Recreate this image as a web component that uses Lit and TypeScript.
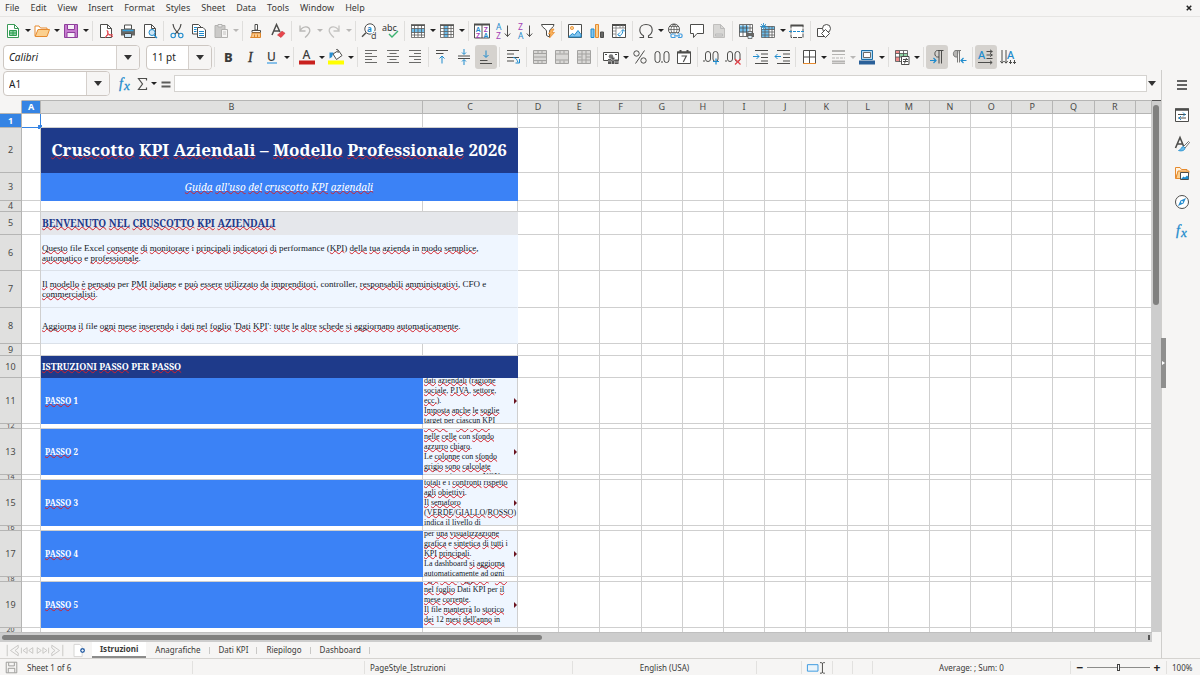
import { LitElement, html, css, svg, nothing, type TemplateResult } from "lit";
import { customElement } from "lit/decorators.js";
import { classMap } from "lit/directives/class-map.js";

const INK = "#4d4d4b";
const BLUE = "#1e8bcd";

/* Toolbar glyphs, all drawn on a 16 by 16 grid. */
const icons: Record<string, TemplateResult> = {
  new: svg`<path d="M2.500 1.500h7l4 4v9h-11z" fill="#fff" stroke="#3a9a57"/><path d="M9.500 1.500v4h4" fill="none" stroke="#3a9a57"/><path d="M4.500 7.500h7v5h-7zM4.500 10h7M8 7.500v5" fill="#8fd3a4" stroke="#2f9e52"/>`,
  open: svg`<path d="M1 13V3h4l1.500 2H13v2" fill="#fff" stroke="#e68a2e"/><path d="M1.200 13.500 4 6.500h11.500l-2.500 7z" fill="#fbd08f" stroke="#e68a2e"/>`,
  save: svg`<path d="M1.500 1.500h13v13h-13z" fill="#c77bd0" stroke="#8e3f9b"/><path d="M4.500 1.500h7v5h-7zM4 9.500h8v5H4z" fill="#f6f0f8" stroke="#8e3f9b"/>`,
  pdf: svg`<path d="M2.500 1.500h7l4 4v9h-11z" fill="#fff" stroke="${INK}"/><path d="M9.500 1.500v4h4" fill="none" stroke="${INK}"/><path d="M9 7c.5 4 2.500 6 6 6.500M10 8c0 3-1 5.500-3 6.800M7.500 13.500c2-2 4-2.500 7.500-1.500" fill="none" stroke="#e2434b"/>`,
  print: svg`<path d="M4.500 2h7v4h-7z" fill="#fff" stroke="${INK}"/><path d="M1 6h14v6.500H1z" fill="#686866"/><path d="M2.500 7.500h11" stroke="#35a1dd" stroke-width="1.500"/><path d="M4.500 10.500h7v4h-7z" fill="#cfe6f5" stroke="${INK}"/>`,
  preview: svg`<path d="M2.500 1.500h7l4 4v9h-11z" fill="#fff" stroke="${INK}"/><path d="M9.500 1.500v4h4" fill="none" stroke="${INK}"/><circle cx="10" cy="9.500" r="3" fill="#cfe6f5" stroke="${BLUE}"/><path d="m12 12 3 3" stroke="${BLUE}" stroke-width="1.300"/>`,
  cut: svg`<path d="M4 1c.5 4 2.500 7 6 10M12 1c-.5 4-2.500 7-6 10" fill="none" stroke="${INK}" stroke-width="1.200"/><circle cx="4.200" cy="12.500" r="2.200" fill="none" stroke="${BLUE}" stroke-width="1.100"/><circle cx="11.800" cy="12.500" r="2.200" fill="none" stroke="${BLUE}" stroke-width="1.100"/>`,
  copy: svg`<path d="M1.500 1.500h6l2.500 2.500v7H1.500z" fill="#fff" stroke="${INK}"/><path d="M6.500 4.500h5.500l2.500 2.500v7.500h-8z" fill="#fff" stroke="${INK}"/><path d="M3 4.500h3M3 6.500h2.500M3 8.500h2.500M8 8.500h5M8 10.500h5M8 12.500h5" stroke="${BLUE}"/>`,
  paste: svg`<path d="M2 2.500h10v12H2z" fill="#cbcac8" stroke="#b3b2b0"/><path d="M5 1.500h4v2.500H5z" fill="#eee" stroke="#b3b2b0"/><path d="M8.500 6.500h6v8h-6z" fill="#f6f5f4" stroke="#b3b2b0"/><path d="M10 9h3M10 11h3" stroke="#c3c2c0"/>`,
  clone: svg`<path d="M7 1.500h2.500V7H7z" fill="#fff" stroke="${INK}"/><path d="M4 7.500h8.500v2H4z" fill="#fff" stroke="${INK}"/><path d="M4 10h8.500v4.500h-10c1-1 1.500-2.500 1.500-4.500z" fill="#fbc98a" stroke="#dd852b"/><path d="M6.500 11.500v3M9.500 11.500v3" stroke="#dd852b"/>`,
  clear: svg`<path d="m2 12 4.500-10.500L10 9M3.800 8H10" fill="none" stroke="${INK}" stroke-width="1.500"/><path d="m7.500 12 4.500-3.800 3 2-4 4.300z" fill="#e8464c" stroke="#c53239" stroke-width=".6"/>`,
  undo: svg`<path d="M3 2.500V8h5.500M3.200 7.800C5.500 3 12 2.500 12.800 7c.4 3-2 5-4.800 7.500" fill="none" stroke="#b9b8b6" stroke-width="1.300"/>`,
  redo: svg`<path d="M13 2.500V8H7.500M12.800 7.800C10.500 3 4 2.500 3.200 7c-.4 3 2 5 4.800 7.500" fill="none" stroke="#c4c3c1" stroke-width="1.300"/>`,
  find: svg`<circle cx="9" cy="6" r="5.200" fill="#fff" stroke="${INK}"/><path d="m5 9.800-4 4" stroke="${INK}" stroke-width="1.500"/><text x="6" y="8.500" font-size="8" font-weight="700" fill="${BLUE}">a</text><text x="10" y="15.500" font-size="9" fill="${INK}" stroke="#f6f5f4" stroke-width="2" paint-order="stroke">d</text>`,
  spell: svg`<text x="-1" y="8" font-size="9" fill="#333">abc</text><path d="m6 11 3 3 6-6" fill="none" stroke="#3cb371" stroke-width="1.400"/>`,
  row: svg`<path d="M1.500 2.500h13v12h-13z" fill="#fff"/><path d="M1.500 5.500h13v4h-13z" fill="#6cbcea"/><path d="M1.500 2.500h13v12h-13zM1.500 5.500h13M1.500 9.500h13M1.500 12h13M4.500 2v12M8 2v12M11.500 2v12" fill="none" stroke="#5c5c5a" stroke-width=".8"/><path d="M1 2h14" stroke="${INK}" stroke-width="1.500"/>`,
  col: svg`<path d="M1.500 2.500h13v12h-13z" fill="#fff"/><path d="M5 2.500h4v12H5z" fill="#6cbcea"/><path d="M1.500 2.500h13v12h-13zM1.500 5.500h13M1.500 8.500h13M1.500 11.500h13M5 2v12M9 2v12M12 2v12" fill="none" stroke="#5c5c5a" stroke-width=".8"/><path d="M1 2h14" stroke="${INK}" stroke-width="1.500"/>`,
  sort: svg`<path d="M.5 1.500h15v13.500H.5zM8 2v13" fill="#fff" stroke="${INK}"/><path d="M0 1.500h16" stroke="${INK}" stroke-width="2"/><g font-size="7" font-weight="600"><text x="1.800" y="8.800" fill="${BLUE}">A</text><text x="9.800" y="8.800" fill="#a33fb5">Z</text><text x="2" y="14.600" fill="#a33fb5">Z</text><text x="9.500" y="14.600" fill="${BLUE}">A</text></g>`,
  asc: svg`<g font-size="8.500"><text x="0" y="7" fill="${BLUE}">A</text><text x="0" y="15.500" fill="#a33fb5">Z</text></g><path d="M11.500 2.500v11M8.800 10.500l2.700 3 2.700-3" fill="none" stroke="${INK}"/>`,
  desc: svg`<g font-size="8.500"><text x="0" y="7" fill="#a33fb5">Z</text><text x="0" y="15.500" fill="${BLUE}">A</text></g><path d="M11.500 2.500v11M8.800 10.500l2.700 3 2.700-3" fill="none" stroke="${INK}"/>`,
  filter: svg`<path d="M1.500 1.500h12.500c0 3-4.500 4.500-4.500 6.500v6l-3-1.500V8C6.500 6 1.500 4.500 1.500 1.500z" fill="#fff" stroke="${INK}"/><path d="m11.500 6-3 5h2.200L9.500 15l5-5.500H12L14 6z" fill="#f9b25c" stroke="#e68a2e" stroke-width=".7"/>`,
  image: svg`<path d="M1.500 1.500h13v13h-13z" fill="#fff" stroke="${INK}"/><circle cx="5" cy="5" r="1.600" fill="#fbd08f" stroke="#e68a2e" stroke-width=".8"/><path d="m2 13.500 3.500-3 2 1.500 3.500-4.500 3 4v2.500H2z" fill="#83c5ee" stroke="${BLUE}"/>`,
  chart: svg`<path d="M2 6h3v8.500H2z" fill="#83c5ee" stroke="${BLUE}"/><path d="M6.500 1.500h3v13h-3z" fill="#fbd08f" stroke="#e68a2e"/><path d="M11.500 9h3v5.500h-3z" fill="#686866" stroke="${INK}"/>`,
  pivot: svg`<path d="M1.500 1.500h13v13h-13z" fill="#fff" stroke="${INK}"/><path d="M1 2h14" stroke="${INK}" stroke-width="2"/><path d="M2 5h12M5 3v11M2 8h3M2 11h3M9 2v3M12 2v3" stroke="#777" stroke-width=".8"/><path d="M7 11.500c0 2 4.500 2 5-4.500M10 8.500 12 6.500l2 2M9 9.500l-2 2 2 2" fill="none" stroke="${BLUE}"/>`,
  omega: svg`<path d="M1.500 14.500h4v-1.800C2.500 11 1.800 9 1.800 7c0-3.500 2.700-5.500 6.200-5.500s6.200 2 6.200 5.500c0 2-.7 4-3.700 5.700v1.800h4" fill="none" stroke="${INK}" stroke-width="1.100"/>`,
  link: svg`<circle cx="7" cy="6.500" r="5.500" fill="#fff" stroke="${INK}"/><path d="M1.500 6.500h11M7 1v10M2.500 3.500h9M2.500 9.500h9M7 1c-4 3.500-4 7.500 0 11M7 1c4 3.500 4 7.500 0 11" fill="none" stroke="${INK}" stroke-width=".7"/><path d="M3.500 10.500h12v4h-12z" fill="#f6f5f4"/><path d="M8.500 11H5c-1.500 0-1.500 3.500 0 3.500h3.500M11 11h3c1.500 0 1.500 3.500 0 3.500h-3M7 12.800h6" fill="none" stroke="#3d9ae0" stroke-width="1.200"/>`,
  comment: svg`<path d="M1.500 1.500h13v9H8l-3.500 4v-4h-3z" fill="#fff" stroke="${INK}"/>`,
  header: svg`<path d="M2.500 1.500h7l4 4v9h-11z" fill="#d8d7d5" stroke="#c0bfbd"/><path d="M9.500 1.500v4h4M4.500 11h7v2h-7z" fill="none" stroke="#bbb"/>`,
  area: svg`<path d="M1.500 1.500h13v12h-13z" fill="#fff"/><path d="M1.500 2.500h9v7h-9z" fill="#6cbcea"/><path d="M1.500 1.500h13v12h-13zM1.500 5h13M1.500 9h13M5 2v11M8.500 2v11M12 2v11" fill="none" stroke="${INK}" stroke-width=".8"/><path d="M8 10h8v4H8z" fill="#686866"/><path d="M10 8.500h4v2h-4zM10 12.500h4v3h-4z" fill="#d9ecf8" stroke="${INK}" stroke-width=".7"/>`,
  freeze: svg`<path d="M1.500 3.500h13v11h-13z" fill="#fff"/><path d="M5 3.500h10v3H5zM1.500 6.500H5v8H1.500z" fill="#6cbcea"/><path d="M5 3.500h4v11H5z" fill="#6cbcea"/><path d="M1.500 3.500h13v11h-13zM1.500 6.500h13M1.500 9h13M1.500 12h13M5 2v13M9 3v12M12 3v12" fill="none" stroke="#5c5c5a" stroke-width=".8"/><path d="M3.500 0v7M0 3.500h7M1 1l5 5M6 1 1 6" stroke="${BLUE}" stroke-width=".8"/>`,
  split: svg`<path d="M2 2.500h12v12H2z" fill="#fff" stroke="${INK}" stroke-dasharray="4 1"/><path d="M1.500 2.500h13" stroke="${INK}" stroke-width="2"/><path d="M0 8.500h16" stroke="${BLUE}" stroke-dasharray="3 1"/>`,
  shapes: svg`<path d="M1.500 5.500h7v8h-7z" fill="#fff" stroke="${INK}"/><circle cx="10.500" cy="5.500" r="4" fill="#fff" stroke="${INK}"/><path d="m9.500 6.500 4 4-4 4-4-4z" fill="#fff" stroke="${INK}"/>`,
  bold: svg`<text x="4" y="12.500" font-size="13" font-weight="800" fill="#3c3c3a">B</text>`,
  italic: svg`<text x="6" y="12.500" font-size="14" font-style="italic" font-family="Liberation Serif" fill="#333" stroke="#333" stroke-width=".3">I</text>`,
  underline: svg`<text x="3" y="11.500" font-size="12" font-weight="500" fill="#3c3c3a">U</text><path d="M3 14h10" stroke="#62aee6" stroke-width="1.500"/>`,
  color: svg`<text x="3.500" y="10" font-size="12" font-weight="500" fill="#3c3c3a">A</text><path d="M0 11.500h16v4H0z" fill="#c9211e"/>`,
  fill: svg`<path d="M0 11.500h16v4H0z" fill="#ff0"/><path d="m5 5 5.500-3.500 3.500 5-5.500 4z" fill="#fff" stroke="${INK}"/><path d="M8 1c1-1.500 3-.5 2 3" fill="none" stroke="${INK}"/><path d="M1.500 9.500V3.500h4L4 8z" fill="#2a8fd0"/>`,
  left: svg`<path d="M2 1.500h12M2 4.500h7M2 7.500h12M2 10.500h7M2 13.500h12" stroke="#6b6b69"/>`,
  center: svg`<path d="M2 1.500h12M4.500 4.500h7M2 7.500h12M4.500 10.500h7M2 13.500h12" stroke="#6b6b69"/>`,
  right: svg`<path d="M2 1.500h12M7 4.500h7M2 7.500h12M7 10.500h7M2 13.500h12" stroke="#6b6b69"/>`,
  top: svg`<path d="M2 1.500h12M2 4.500h7.500" stroke="${INK}"/><path d="M8 14.500V7M5.500 9.500 8 7l2.500 2.500" fill="none" stroke="${BLUE}"/>`,
  middle: svg`<path d="M2 7h12M2 9.500h12" stroke="${INK}"/><path d="M8 0v5M6 3.500l2 2 2-2M8 16v-5M6 12.500l2-2 2 2" fill="none" stroke="${BLUE}"/>`,
  bottom: svg`<path d="M2 14.500h12M2 11.500h7.500" stroke="${INK}"/><path d="M8 1.500V8M5.500 6 8 8.500 10.500 6" fill="none" stroke="${BLUE}"/>`,
  wrap: svg`<path d="M2 1.500h12M2 5h7M2 8.500h12M2 12h7" stroke="${INK}"/><path d="M8 8.500c3 0 4 2 5 5M14.500 10v4h-4" fill="none" stroke="${BLUE}"/>`,
  merge: svg`<path d="M1.500 1.500h13v13h-13zM1.500 4.500h13M1.500 8h13M1.500 11.500h13M6 1.500v3M10 1.500v3M6 11.500v3M10 11.500v3" fill="#d9d8d6" stroke="#a3a2a0"/>`,
  merge2: svg`<path d="M1.500 1.500h13v13h-13zM1.500 5h13M1.500 11h13M6 1.500v3M10 1.500v3M6 11.500v3M10 11.500v3" fill="#d9d8d6" stroke="#a3a2a0"/>`,
  merge3: svg`<path d="M1.500 1.500h13v13h-13zM1.500 5h13M1.500 8h4M10 8h4M1.500 11h13M6 1.500v13M10 1.500v13" fill="#d9d8d6" stroke="#a3a2a0"/>`,
  currency: svg`<path d="M.5 3.500h15v8H.5z" fill="#fff" stroke="${INK}"/><circle cx="8" cy="7.500" r="2.300" fill="#777"/><path d="M2 5.500h2M12 5.500h2" stroke="${INK}"/><path d="M5 10h3v5H5zM8.500 8.500h3V15h-3zM12 10.500h3.500V15H12z" fill="#555"/><path d="M5 12h3M8.500 11h3M12 13h3" stroke="#ddd" stroke-width=".7"/>`,
  percent: svg`<circle cx="4.500" cy="4.500" r="2.700" fill="none" stroke="${INK}"/><circle cx="11.500" cy="11.500" r="2.700" fill="none" stroke="${INK}"/><path d="M12.500 1.500 3.500 14.500" stroke="${INK}"/>`,
  number: svg`<rect x="1" y="2.500" width="5" height="11" rx="2.500" fill="none" stroke="${INK}"/><rect x="10" y="2.500" width="5" height="11" rx="2.500" fill="none" stroke="${INK}"/><path d="M8 12v2" stroke="${INK}"/>`,
  date: svg`<path d="M1.500 3h13v11.500h-13z" fill="#fff" stroke="${INK}"/><path d="M1 3.500h14M4.500 1v3M11.500 1v3" stroke="${INK}" stroke-width="2"/><path d="M5.500 7h4.800L7.300 13" fill="none" stroke="${INK}" stroke-width="1.200"/>`,
  adddec: svg`<path d="M1 11v2" stroke="${INK}"/><rect x="2.500" y="2.500" width="5" height="10" rx="2.500" fill="none" stroke="${INK}"/><rect x="10" y="2.500" width="5" height="10" rx="2.500" fill="none" stroke="${INK}"/><path d="M13 9.500v6M10 12.500h6" stroke="${BLUE}" stroke-width="1.200"/>`,
  deldec: svg`<path d="M1 11v2" stroke="${INK}"/><rect x="2.500" y="2.500" width="5" height="10" rx="2.500" fill="none" stroke="${INK}"/><rect x="10" y="2.500" width="5" height="10" rx="2.500" fill="none" stroke="${INK}"/><path d="m10 10 5.500 5.500M15.500 10 10 15.500" stroke="#e2434b" stroke-width="1.200"/>`,
  indent: svg`<path d="M3 1.500h13M9 5h7M9 8.500h7M9 12h7M3 14.500h13" stroke="${INK}"/><path d="M1 7.500h6M4.500 5 7 7.500 4.500 10" fill="none" stroke="${BLUE}"/>`,
  outdent: svg`<path d="M3 1.500h13M9 5h7M9 8.500h7M9 12h7M3 14.500h13" stroke="${INK}"/><path d="M1 7.500h6M3.500 5 1 7.500 3.500 10" fill="none" stroke="${BLUE}"/>`,
  borders: svg`<path d="M2.500 14.500v-13h12v13M8.500 2v12M2.500 8h12" fill="#fff" stroke="${INK}"/><path d="M2 14.500h13" stroke="#e68a2e"/>`,
  bstyle: svg`<path d="M2 2h13M2 12.500h13" stroke="#b5b4b2" stroke-width="2"/><path d="M2 5.500h13M2 14.500h13" stroke="#b5b4b2"/><path d="M2 9h13" stroke="#b5b4b2" stroke-dasharray="3 1"/>`,
  bcolor: svg`<path d="M2.500 1.500h11v9h-11z" fill="#b5dbf4" stroke="#1c6fa8"/><path d="M4.500 3.500h7v5h-7z" fill="#fff" stroke="#6a6a68"/><path d="M0 11.500h16v4H0z" fill="#2a6099"/>`,
  cond: svg`<path d="M1.500 1.500h12v11h-12z" fill="#fff"/><path d="M1.500 1.500h4v3h-4zM1.500 8h4v4h-4z" fill="#f08c8c"/><path d="M5.500 4.500h8V8h-8z" fill="#8fd3a4"/><path d="M1.500 1.500h12v11h-12zM1.500 4.500h12M1.500 8h12M5.500 2v11M9.500 2v11" fill="none" stroke="${INK}" stroke-width=".8"/><path d="M7.500 7.500h7.500v8H7.500z" fill="#fff" stroke="${INK}"/><path d="M9 10.500h5M9 12.500h5M12.500 9l-2 5.500" stroke="${INK}"/>`,
  ltr: svg`<path d="M14.500 1.500H8.500C5 1.500 5 8 8.500 8H10M10 1.500v13M12.500 1.500v13" fill="none" stroke="${INK}"/><path d="M1 11.500h6M4.500 9 7 11.500 4.500 14" fill="none" stroke="${BLUE}" stroke-width="1.200"/>`,
  rtl: svg`<path d="M8 1.500H5C1.500 1.500 1.500 8 5 8h1.500z" fill="#b5b4b2"/><path d="M10 1.500H5C1.500 1.500 1.500 8 5 8h1.500M6.500 1.500v12M8.500 1.500v12" fill="none" stroke="#7a7a78"/><path d="M15.500 11.500h-5.500M12.500 9 10 11.500l2.500 2.500" fill="none" stroke="${BLUE}" stroke-width="1.200"/>`,
  horiz: svg`<text x="0" y="9.500" font-size="11" font-weight="500" fill="${BLUE}">A</text><path d="M8.500 2.500h6M8.500 6h6M8.500 9.500h6M0 13.500h14M12 .8l2.200 1.700L12 4.200M12 4.300l2.200 1.700L12 7.700M12 11.800l2.200 1.700-2.200 1.700" fill="none" stroke="${INK}"/>`,
  vert: svg`<text x="7" y="9.500" font-size="11" font-weight="500" fill="${BLUE}">A</text><path d="M2 1v13M6 1v13M10.500 11v4M14.500 11v4M.3 12.200 2 14.200l1.700-2M4.300 12.200 6 14.200l1.700-2M9 13l1.500 1.500L12 13M13 13l1.500 1.500L16 13" fill="none" stroke="${INK}"/>`,
  sigma: svg`<path d="M12.500 4.500v-2H4.500l4 5.500-4 5.500h8v-2" fill="none" stroke="${INK}" stroke-width="1.200"/>`,
  equals: svg`<path d="M3.500 6.500h9M3.500 10.500h9" stroke="#5c5c5a" stroke-width="2"/>`,
  fx: svg`<g font-style="italic" font-family="Liberation Serif" fill="${BLUE}" stroke="${BLUE}" stroke-width=".3"><text x="2" y="12" font-size="14">f</text><text x="7" y="14" font-size="13">x</text></g>`,
  menu: svg`<path d="M3 4h10M3 8h10M3 12h10" stroke="#333" stroke-width="1.500"/>`,
  props: svg`<path d="M1.500 2h13v12.500h-13z" fill="#fff" stroke="${INK}"/><path d="M1 2.500h14" stroke="${INK}" stroke-width="2.500"/><path d="M4 7.500h8M4 11h8" stroke="${INK}"/><path d="m9 5.500 2 2-2 2M7 9l-2 2 2 2" fill="none" stroke="${BLUE}"/>`,
  styles: svg`<path d="M1.500 12 6 1.500 9.500 10M3.500 8h5" fill="none" stroke="${INK}" stroke-width="1.600"/><path d="m14.500 5.500-5 5 1.500 1.500 4.500-5.500z" fill="#fff" stroke="${INK}" stroke-width=".8"/><path d="M9.500 10.500c-3 .5-2 3.500-5 4 3 1 6.500 0 6.500-2.500z" fill="#6cbcea" stroke="${BLUE}" stroke-width=".8"/>`,
  gallery: svg`<path d="M1.500 13.500v-11h4.500l1.500 2H13v2H4.500z" fill="#fff3e0" stroke="#e68a2e"/><path d="M2 13.500 4 6h11l-1 7.500z" fill="#fbd08f" stroke="#e68a2e"/><path d="M6.500 7.500h8v7h-8z" fill="#fff" stroke="${INK}"/><path d="m7 14 2.500-2.500 1.500 1 2-2 1.500 1.500v2z" fill="${BLUE}"/>`,
  nav: svg`<circle cx="8" cy="8" r="6.500" fill="#fff" stroke="${INK}"/><path d="m12 4-2.500 5.500L4 12l2.500-5.500z" fill="#2a8fd0"/><circle cx="8" cy="8" r="1" fill="#fff"/>`,
  first: svg`<path d="M1.500 1v14M15 1.500v3.500L11 8l4 3v3.500L5.500 8z" fill="none" stroke="#c0bfbd"/>`,
  prev: svg`<path d="M7.500 4.500v7L2.500 8zM14.500 4.500v7L9.500 8zM.5 4.500v7" fill="none" stroke="#c0bfbd"/>`,
  next: svg`<path d="M8.500 4.500v7l5-3.500zM1.500 4.500v7l5-3.500zM15.500 4.500v7" fill="none" stroke="#c0bfbd"/>`,
  last: svg`<path d="M14.500 1v14M1 1.500v3.500L5 8l-4 3v3.500L10.500 8z" fill="none" stroke="#c0bfbd"/>`,
  addsheet: svg`<path d="M2.500.500h7l3 3v12h-10z" fill="#fff" stroke="#cfcecc"/><circle cx="13" cy="8" r="3" fill="#2f64a8"/><path d="M11.500 8h3M13 6.500v3" stroke="#fff"/>`,
  disk: svg`<path d="M1.500 1.500h13v13h-13zM4.500 2v4h7V2M4 14V9h8v5" fill="none" stroke="#8c8c8a"/>`,
  select: svg`<path d="M.5 4.500h13v8H.500z" fill="#eaf4fb" stroke="#3d9ae0" stroke-width="1.200"/><path d="M16 2c2 0 3 0 3 1.500C19 2 20 2 22 2M19 3v11M16 15c2 0 3 0 3-1.500 0 1.500 1 1.500 3 1.500" fill="none" stroke="${INK}" stroke-width="1.200"/>`,
  close: svg`<path d="m5 5 6 6M11 5l-6 6" stroke="#222" stroke-width="2"/>`,
};

const icon = (name: string) =>
  html`<svg class="icon" viewBox="0 0 16 16" aria-hidden="true">${icons[name]}</svg>`;

/* "|" is a separator; after the colon "v" adds an attached drop-down,
   "!" marks a pressed button and "~" an unavailable one. */
const STANDARD =
  "new:v open:v save:v | pdf print preview | cut copy paste:v~ | clone clear | undo:v~ redo:v~ | find spell | row:v col:v | sort asc desc filter | image chart pivot | omega:v link comment header:~ | area freeze:v split | shapes";
const FORMATTING =
  "| bold italic underline:v | color:v fill:v | left center right | top middle bottom:! | wrap | merge:~ merge2:~ merge3:~ | currency:v percent number date | adddec deldec | indent outdent | borders:v bstyle:v~ bcolor:v | cond:v | ltr:! rtl | horiz:! vert";

const tools = (spec: string) =>
  spec.split(" ").map((item) => {
    if (item === "|") return html`<span class="sep"></span>`;
    const [name, flags = ""] = item.split(":");
    const off = flags.includes("~");
    return html`<button
        class=${classMap({ tool: true, on: flags.includes("!") })}
        aria-label=${name}
        ?disabled=${off}
      >${icon(name)}</button>${flags.includes("v")
        ? html`<button class="drop" aria-label="${name} options" ?disabled=${off}></button>`
        : nothing}`;
  });

/* Words inside [brackets] carry the spelling mark. */
const spelled = (text: string) =>
  text.split(/(\[[^\]]*\])/).map((part) =>
    part.startsWith("[") ? html`<span class="miss">${part.slice(1, -1)}</span>` : part
  );

interface Row {
  h: number;
  kind?: string;
  text?: string;
  detail?: string;
}

const ROWS: Row[] = [
  { h: 14 },
  { h: 45, kind: "title", text: "[Cruscotto] [KPI] [Aziendali] – [Modello] [Professionale] 2026" },
  { h: 28, kind: "subtitle", text: "[Guida] [all'uso] [del] [cruscotto] [KPI] [aziendali]" },
  { h: 11 },
  { h: 23, kind: "welcome", text: "[BENVENUTO] [NEL] [CRUSCOTTO] [KPI] [AZIENDALI]" },
  { h: 36, kind: "note", text: "[Questo] file Excel [consente] [di] [monitorare] i [principali] [indicatori] [di] performance ([KPI]) [della] [tua] [azienda] in [modo] [semplice],\n[automatico] e [professionale]." },
  { h: 37, kind: "note", text: "[Il] [modello] [è] [pensato] per [PMI] [italiane] e [può] [essere] [utilizzato] [da] [imprenditori], controller, [responsabili] [amministrativi], CFO e\n[commercialisti]." },
  { h: 36, kind: "note", text: "[Aggiorna] [il] file [ogni] [mese] [inserendo] i [dati] [nel] [foglio] '[Dati] [KPI]': [tutte] [le] [altre] [schede] [si] [aggiornano] [automaticamente]." },
  { h: 12 },
  { h: 22, kind: "band", text: "[ISTRUZIONI] [PASSO] PER [PASSO]" },
  { h: 46, kind: "step", text: "[PASSO] 1", detail: "[dati] [aziendali] ([ragione]\n[sociale], [P.IVA], [settore],\n[ecc.]).\n[Imposta] [anche] [le] [soglie]\ntarget per [ciascun] KPI" },
  { h: 5 },
  { h: 46, kind: "step", text: "[PASSO] 2", detail: "[mensili]. I [dati] [vanno]\n[nelle] [celle] con [sfondo]\n[azzurro] [chiaro].\nLe [colonne] con [sfondo]\n[grigio] [sono] [calcolate]\nautomaticamente, NON" },
  { h: 5 },
  { h: 46, kind: "step", text: "[PASSO] 3", detail: "[totali] e i [confronti] [rispetto]\n[agli] [obiettivi].\n[Il] [semaforo]\n([VERDE]/[GIALLO]/[ROSSO])\nindica il livello di" },
  { h: 5 },
  { h: 46, kind: "step", text: "[PASSO] 4", detail: "per [una] [visualizzazione]\n[grafica] e [sintetica] [di] [tutti] i\n[KPI] [principali].\nLa dashboard [si] [aggiorna]\n[automaticamente] ad [ogni]" },
  { h: 5 },
  { h: 46, kind: "step", text: "[PASSO] 5", detail: "[ogni] [mese], [aggiorna] i [dati]\n[nel] [foglio] Dati KPI per [il]\n[mese] [corrente].\n[Il] file [manterrà] lo [storico]\n[dei] 12 [mesi] [dell'anno] in\n " },
  { h: 5 },
];

const LETTERS = "DEFGHIJKLMNOPQR".split("");

@customElement("app-root")
export class AppRoot extends LitElement {
  static styles = css`
    :host {
      display: flex;
      flex-direction: column;
      height: 100vh;
      overflow: hidden;
      background: #f6f5f4;
      color: #3a3a38;
      font: 9px/14px "Noto Sans", "Open Sans", sans-serif;
    }
    * { box-sizing: border-box; }
    button, input {
      font: inherit;
      color: inherit;
      border: 0;
      margin: 0;
      padding: 0;
      background: none;
      outline: none;
    }
    button { flex: none; display: flex; align-items: center; justify-content: center; }
    .icon { width: 16px; height: 16px; flex: none; overflow: visible; font-family: "Noto Sans", sans-serif; }

    .menubar { display: flex; align-items: center; height: 17px; padding: 0 5px; gap: 11px; border-bottom: 1px solid #e6e5e3; }
    .close { margin-left: auto; }
    .close .icon { width: 12px; height: 12px; }

    .toolbar { display: flex; align-items: center; height: 27px; padding: 0 2px; }
    .format { height: 26px; padding: 0 3px; }
    .tool { width: 22px; height: 24px; border-radius: 3px; }
    .on { background: #d5d2ce; }
    .sep { flex: none; width: 5px; height: 20px; background: linear-gradient(#dfdedc, #dfdedc) center / 1px 100% no-repeat; }
    .drop { width: 7px; height: 22px; }
    .drop + .sep { width: 6px; }
    .drop::before { content: ""; border: 3px solid transparent; border-top: 3px solid #222; border-bottom: 0; }
    .drop:disabled::before { border-top-color: #b9b8b6; }

    .combo { display: flex; height: 25px; border: 1px solid #cdc7c2; border-radius: 4px; background: #fff; overflow: hidden; flex: none; }
    .combo input { flex: 1; min-width: 0; padding-left: 5px; font-size: 10px; color: #222; }
    .combo button { width: 23px; border-left: 1px solid #d5d0cc; background: #f6f5f4; }
    .combo button::before, .expand::before { content: ""; border: 4px solid transparent; border-top: 5px solid #333; border-bottom: 0; }
    .family { width: 137px; margin-right: 6px; }
    .family input { font-style: italic; }
    .size { width: 66px; }
    .name { width: 107px; margin-right: 6px; }

    .main { flex: 1; min-height: 0; display: flex; }
    .work { flex: 1; min-width: 0; display: flex; flex-direction: column; }
    .formula { display: flex; align-items: center; height: 30px; padding: 0 4px 3px 3px; flex: none; }
    .formula .small { width: 17px; }
    .formula .line { flex: 1; min-width: 0; height: 17px; border: 1px solid #d5d3d0; background: #fff; }
    .expand { width: 10px; }

    .view { flex: 1; min-height: 0; display: flex; }
    .sheet { flex: 1; min-width: 0; overflow: hidden; background: #fff; }
    .vscroll { width: 9px; background: #cdcdcd; border-top: 1px solid #555; padding: 4px 2px 0 1px; }
    .vthumb { height: 38%; border-radius: 3px; background: #80807f; }
    .hscroll { height: 10px; flex: none; background: #cdcdcd; padding: 2px; margin-right: 9px; display: flex; justify-content: space-between; border-top: 1px solid #bfbfbf; }
    .hthumb { width: 47%; border-radius: 3px; background: #80807f; }
    .hend { width: 2px; background: #555; }

    table { width: 100%; table-layout: fixed; border-spacing: 0; }
    .c-head { width: 22px; }
    .c-a { width: 19px; }
    .c-b { width: 382px; }
    .c-c { width: 95px; }
    .c-last { width: 16px; }
    th, td { padding: 0; border: 0 solid #cfcfcf; border-width: 0 1px 1px 0; }
    th { background: #e0e0df; border-color: #b5b5b4; font-weight: 400; color: #4a4a48; line-height: 10px; overflow: hidden; }
    thead th { border-top: 1px solid #b5b5b4; height: 14px; }
    thead .corner { background: #f6f5f4; border-color: #f6f5f4 #b5b5b4 #b5b5b4 #f6f5f4; }
    thead .cur, tbody .cur { background: #3584e4; color: #fff; font-weight: 700; }
    .box { display: flex; align-items: center; overflow: hidden; }
    th .box { justify-content: center; }
    .tiny { font-size: 7px; }
    td { font-family: "Noto Serif", "Liberation Serif", serif; font-size: 8px; line-height: 10px; color: #1f2937; position: relative; }
    td .box { white-space: pre; padding-left: 1px; }
    .active { border-color: #3584e4; }
    .handle { position: absolute; right: -2px; bottom: -2px; width: 4px; height: 4px; background: #3584e4; }
    .miss { text-decoration: underline wavy #d3202a 1px; text-underline-offset: -1px; text-decoration-skip-ink: none; }

    .title { background: #1e3a8a; border-color: #1e3a8a; color: #fff; font-size: 17px; font-weight: 700; line-height: 26px; }
    .subtitle { background: #3b82f6; border-color: #3b82f6; color: #fff; font-size: 10px; font-style: italic; line-height: 14px; }
    .title .box, .subtitle .box { justify-content: center; padding: 0; }
    .welcome { background: #e5e7eb; border-color: #e5e7eb; color: #1e3a8a; font-size: 10px; font-weight: 700; }
    .note, .detail { font-family: "Liberation Serif", serif; color: #111827; }
    .note { background: #eff6ff; border-color: #dbe1e9 #eff6ff; font-size: 9px; }
    .band { background: #1e3a8a; border-color: #1e3a8a; color: #fff; font-size: 9px; font-weight: 700; }
    .step { background: #3b82f6; border-color: #3b82f6; color: #fff; font-weight: 700; }
    .step .box { padding-left: 4px; }
    .detail { background: #eff6ff; font-size: 8px; }
    .more { position: absolute; right: 0; top: 20px; border: 3px solid transparent; border-left: 3px solid #6b1420; border-right: 0; }

    .tabs { display: flex; align-items: stretch; height: 16px; flex: none; padding-left: 5px; font-size: 8px; }
    .tabs .nav { width: 15px; }
    .tabs .add { width: 27px; }
    .tabs .nav .icon, .tabs .add .icon { width: 13px; height: 13px; }
    .tab { padding: 0 9px; }
    .tab + .tab { background: linear-gradient(#c9c8c6, #c9c8c6) right center / 1px 7px no-repeat; }
    .tabs .sel { background: #fff; border-bottom: 2px solid #8c8c8b; font-weight: 700; padding: 0 8px; }

    .side { width: 39px; flex: none; border-left: 1px solid #cfcecc; display: flex; flex-direction: column; align-items: center; gap: 5px; padding-top: 3px; position: relative; }
    .side .tool { margin-left: 2px; }
    .side .tool:first-child { margin-bottom: 1px; }
    .grip { position: absolute; left: -1px; top: 268px; width: 5px; height: 50px; background: #8f8f8e; }
    .grip::before { content: ""; border: 2px solid transparent; border-left: 3px solid #fff; border-right: 0; }

    .status { display: grid; grid-template-columns: 22px 171fr 172fr 208fr 184fr 45fr 31px 20px 20px 198fr 96px 33px; height: 17px; flex: none; border-top: 1px solid #d5d3d0; align-items: center; font-size: 8px; }
    .cell { height: 13px; line-height: 13px; border-right: 1px solid #e2e1df; display: flex; align-items: center; padding: 0 5px; white-space: nowrap; overflow: hidden; }
    .cell:last-child, .cell:first-child { border: 0; }
    .mid { justify-content: center; }
    .status .icon { width: 13px; height: 13px; }
    .zoom { padding: 0 4px; gap: 2px; }
    .zoom button { width: 10px; font-size: 12px; font-weight: 700; color: #222; }
    .zoom input { appearance: none; flex: 1; min-width: 0; height: 10px; background: linear-gradient(#8c8c8a, #8c8c8a) center / 100% 1px no-repeat; }
    .zoom input::-webkit-slider-thumb { appearance: none; width: 3px; height: 7px; background: #fff; border: 1px solid #444; }
  `;

  private renderCells(row: Row) {
    const size = `height:${row.h - 1}px`;
    if (row.kind === "step")
      return html`<td class="step"><div class="box" style=${size}><span>${spelled(row.text!)}</span></div></td>
        <td class="detail"><div class="box" style=${size}><span>${spelled(row.detail!)}</span></div><span class="more"></span></td>`;
    if (row.kind)
      return html`<td class=${row.kind} colspan="2"><div class="box" style=${size}><span>${spelled(row.text!)}</span></div></td>`;
    return html`<td></td><td></td>`;
  }

  render() {
    return html`
      <nav class="menubar">
        ${["File", "Edit", "View", "Insert", "Format", "Styles", "Sheet", "Data", "Tools", "Window", "Help"].map(
          (m) => html`<button>${m}</button>`
        )}
        <button class="close" aria-label="Close document">${icon("close")}</button>
      </nav>
      <div class="toolbar">${tools(STANDARD)}</div>
      <div class="toolbar format">
        <div class="combo family"><input aria-label="Font name" value="Calibri" /><button aria-label="Font list"></button></div>
        <div class="combo size"><input aria-label="Font size" value="11 pt" /><button aria-label="Size list"></button></div>
        ${tools(FORMATTING)}
      </div>
      <div class="main">
        <div class="work">
          <div class="formula">
            <div class="combo name"><input aria-label="Name box" value="A1" /><button aria-label="Named ranges"></button></div>
            <button class="tool small" aria-label="Function wizard">${icon("fx")}</button>
            <button class="tool small" aria-label="Select function">${icon("sigma")}</button>
            <button class="drop" aria-label="Function list"></button>
            <button class="tool small" aria-label="Formula">${icon("equals")}</button>
            <input class="line" aria-label="Input line" />
            <button class="expand" aria-label="Expand formula bar"></button>
          </div>
          <div class="view">
            <div class="sheet">
              <table>
                <colgroup>
                  <col class="c-head" /><col class="c-a" /><col class="c-b" /><col class="c-c" />
                  ${LETTERS.map(() => html`<col />`)}<col class="c-last" />
                </colgroup>
                <thead>
                  <tr>
                    <th class="corner"></th>
                    <th class="cur" scope="col">A</th>
                    ${["B", "C", ...LETTERS, ""].map((l) => html`<th scope="col">${l}</th>`)}
                  </tr>
                </thead>
                <tbody>
                  ${ROWS.map(
                    (row, i) => html`<tr>
                      <th class=${classMap({ cur: i === 0, tiny: row.h < 6 })} scope="row">
                        <div class="box" style="height:${row.h - 1}px">${i + 1}</div>
                      </th>
                      <td class=${i === 0 ? "active" : ""}>${i === 0 ? html`<span class="handle"></span>` : nothing}</td>
                      ${this.renderCells(row)}
                      ${LETTERS.map(() => html`<td></td>`)}
                      <td></td>
                    </tr>`
                  )}
                </tbody>
              </table>
            </div>
            <div class="vscroll"><div class="vthumb"></div></div>
          </div>
          <div class="hscroll"><div class="hthumb"></div><div class="hend"></div></div>
          <div class="tabs">
            ${["first", "prev", "next", "last"].map((n) => html`<button class="nav" aria-label="${n} sheet" disabled>${icon(n)}</button>`)}
            <button class="add" aria-label="Add sheet">${icon("addsheet")}</button>
            ${["Istruzioni", "Anagrafiche", "Dati KPI", "Riepilogo", "Dashboard"].map(
              (t, i) => html`<button class=${classMap({ tab: true, sel: i === 0 })}>${t}</button>`
            )}
          </div>
        </div>
        <aside class="side">
          ${["menu", "props", "styles", "gallery", "nav", "fx"].map(
            (n) => html`<button class="tool" aria-label=${n}>${icon(n)}</button>`
          )}
          <button class="grip" aria-label="Hide sidebar"></button>
        </aside>
      </div>
      <footer class="status">
        <div class="cell">${icon("disk")}</div>
        <div class="cell">Sheet 1 of 6</div>
        <div class="cell"></div>
        <div class="cell">PageStyle_Istruzioni</div>
        <div class="cell mid">English (USA)</div>
        <div class="cell"></div>
        <div class="cell">${icon("select")}</div>
        <div class="cell"></div>
        <div class="cell"></div>
        <div class="cell mid">Average: ; Sum: 0</div>
        <div class="cell zoom"><button aria-label="Zoom out">−</button><input type="range" aria-label="Zoom" /><button aria-label="Zoom in">+</button></div>
        <div class="cell">100%</div>
      </footer>
    `;
  }
}
